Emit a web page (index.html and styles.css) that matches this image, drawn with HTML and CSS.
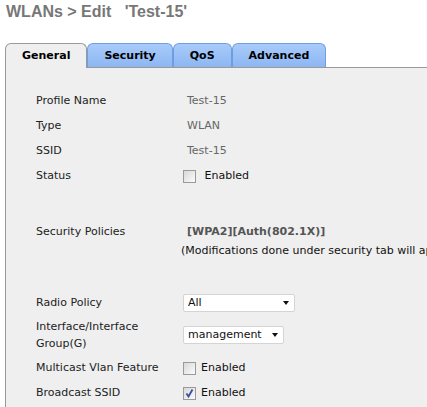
FILE: index.html
```html
<!DOCTYPE html>
<html>
<head>
<meta charset="utf-8">
<link rel="stylesheet" href="styles.css">
</head>
<body>
<h1 class="title">WLANs &gt; Edit &nbsp;&nbsp;'Test-15'</h1>
<div class="tabs">
  <div class="tab active">General</div>
  <div class="tab">Security</div>
  <div class="tab">QoS</div>
  <div class="tab">Advanced</div>
</div>
<div class="panel">
  <div class="row"><div class="label">Profile Name</div><div class="value text">Test-15</div></div>
  <div class="row"><div class="label">Type</div><div class="value text">WLAN</div></div>
  <div class="row"><div class="label">SSID</div><div class="value text">Test-15</div></div>
  <div class="row"><div class="label">Status</div><div class="value"><span class="cb"></span><span class="cb-label">&nbsp;Enabled</span></div></div>
  <div class="spacer"></div>
  <div class="row top">
    <div class="label">Security Policies</div>
    <div class="value policy">
      <div class="policy-name">[WPA2][Auth(802.1X)]</div>
      <div class="policy-note">(Modifications done under security tab will appear after applying the changes.)</div>
    </div>
  </div>
  <div class="spacer2"></div>
  <div class="row"><div class="label">Radio Policy</div><div class="value"><div class="select wide">All<span class="arrow"></span></div></div></div>
  <div class="row tall"><div class="label">Interface/Interface<br>Group(G)</div><div class="value"><div class="select">management<span class="arrow"></span></div></div></div>
  <div class="row"><div class="label">Multicast Vlan Feature</div><div class="value"><span class="cb"></span><span class="cb-label">Enabled</span></div></div>
  <div class="row"><div class="label">Broadcast SSID</div><div class="value"><span class="cb checked"><svg width="11" height="11" viewBox="0 0 11 11"><path d="M2.5 5.5 L4.5 8.5 L8.5 1.5" fill="none" stroke="#3a4fa0" stroke-width="1.8"/></svg></span><span class="cb-label">Enabled</span></div></div>
</div>
</body>
</html>
```
FILE: styles.css
```css
html, body {
  margin: 0;
  padding: 0;
  background: #fff;
  overflow: hidden;
}
body {
  font-family: "DejaVu Sans", Verdana, sans-serif;
  font-size: 11px;
  color: #222;
  width: 427px;
  height: 407px;
}
.title {
  font-family: "Liberation Sans", Arial, sans-serif;
  font-size: 16px;
  font-weight: bold;
  color: #777;
  margin: 0;
  padding: 2px 0 0 6px;
  line-height: 19px;
  white-space: nowrap;
}
.tabs {
  display: flex;
  margin: 22px 0 0 5px;
  height: 24px;
  gap: 0;
}
.tab {
  box-sizing: border-box;
  height: 24px;
  padding: 0 16px;
  font-size: 11px;
  font-weight: bold;
  color: #000;
  line-height: 24px;
  text-align: center;
  background: linear-gradient(#a8cbfa, #8db6f2);
  border: 1px solid #6f9ee0;
  border-bottom: none;
  border-radius: 6px 6px 0 0;
}
.tab.active {
  background: #efefef;
  border-color: #999;
  height: 25px;
  position: relative;
  z-index: 1;
}
.panel {
  background: #efefef;
  border-left: 1px solid #999;
  border-top: 1px solid #999;
  margin-left: 5px;
  height: 340px;
  padding: 20px 0 0 30px;
  box-sizing: border-box;
}
.row {
  display: flex;
  align-items: center;
  height: 25px;
}
.row.top {
  align-items: flex-start;
  height: auto;
}
.row.tall {
  height: 40px;
}
.label {
  width: 147px;
  flex: none;
  line-height: 17px;
}
.value {
  display: flex;
  align-items: center;
  white-space: nowrap;
}
.value.text {
  color: #666;
  padding-left: 4px;
}
.spacer {
  height: 30px;
}
.spacer2 {
  height: 29px;
}
.policy {
  display: block;
  padding-top: 5px;
}
.policy-name {
  font-weight: bold;
  color: #555;
  padding-left: 4px;
  line-height: 17px;
}
.policy-note {
  margin-left: -2px;
  line-height: 21px;
  color: #111;
}
.row.top .label {
  padding-top: 5px;
}
.cb {
  box-sizing: border-box;
  width: 13px;
  height: 13px;
  border: 1px solid #9a9a9a;
  background: linear-gradient(135deg, #d8d8d8, #fbfbfb);
  display: inline-flex;
  align-items: center;
  justify-content: center;
  margin-top: 1px;
}
.cb-label {
  margin-left: 5px;
  color: #111;
}
.select {
  box-sizing: border-box;
  width: 101px;
  height: 18px;
  background: #fff;
  border: 1px solid #d4d4d4;
  border-radius: 2px;
  padding: 0 5px 0 4px;
  line-height: 16px;
  color: #111;
  display: flex;
  align-items: center;
  justify-content: space-between;
}
.select.wide {
  width: 112px;
}
.arrow {
  width: 0;
  height: 0;
  border-left: 3.5px solid transparent;
  border-right: 3.5px solid transparent;
  border-top: 4px solid #111;
}
```
